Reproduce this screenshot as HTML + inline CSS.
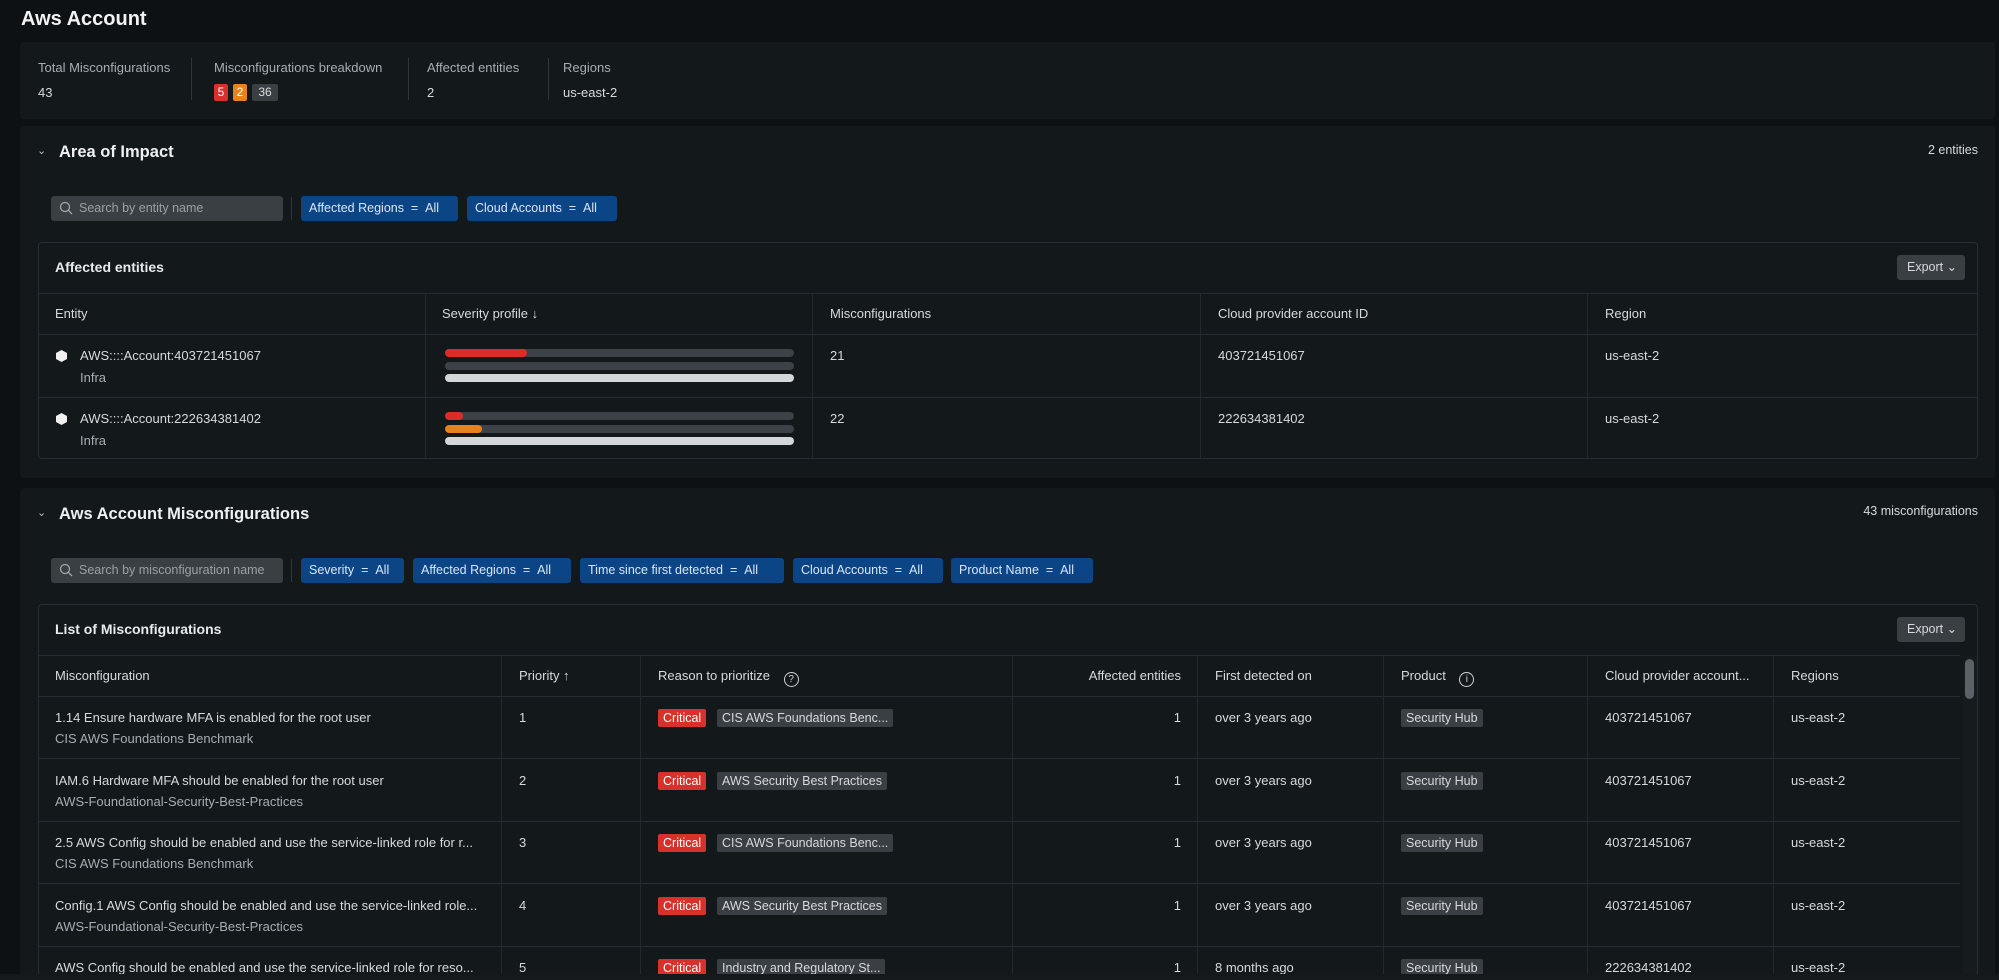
<!DOCTYPE html>
<html style="overflow:hidden;width:1999px;height:980px"><head><meta charset="utf-8"><style>
*{box-sizing:border-box;margin:0;padding:0}
body{width:1999px;height:980px;overflow:hidden;background:#0e1113;font-family:"Liberation Sans",sans-serif;color:#d6dadd;font-size:13px;position:relative}
.a{position:absolute;white-space:nowrap}
.panel{position:absolute;background:#13181b;border-radius:4px}
.card{position:absolute;border:1px solid #282e33;border-radius:4px;background:#13181b}
.muted{color:#a7adb2}
.chip{position:absolute;height:25px;background:#0c4586;border-radius:3px;color:#d9e6f7;font-size:12.5px;line-height:25px;padding:0 8px;white-space:nowrap}
.search{position:absolute;height:25px;background:#3a3f44;border-radius:3px;color:#9aa0a5;font-size:12.5px;line-height:25px;padding-left:28px;white-space:nowrap;overflow:hidden}
.search svg{position:absolute;left:8px;top:5px}
.vsep{position:absolute;width:1px;background:#30363b}
.hl{position:absolute;height:1px;background:#262c31}
.vl{position:absolute;width:1px;background:#232a2e}
.btn{position:absolute;background:#3a3f44;border-radius:3px;color:#d6dadd;font-size:12.5px;line-height:25px;height:25px;padding-left:10px}
.bar{position:absolute;height:8px;border-radius:4px;background:#3c4247;overflow:hidden}
.bar i{display:block;height:100%;border-radius:4px}
.crit{position:absolute;background:#d8302b;color:#fff;border-radius:2px;font-size:12.5px;line-height:18px;padding:0 5px}
.tag{position:absolute;background:#3a3f44;color:#d6dadd;border-radius:2px;font-size:12.5px;line-height:18px;padding:0 5px;white-space:nowrap}
h2{position:absolute;font-size:16.5px;font-weight:bold;color:#eef0f2;white-space:nowrap}
</style></head><body>
<div class="a" style="left:21px;top:8px;font-size:20px;font-weight:bold;color:#f0f2f4">Aws Account</div>

<div class="panel" style="left:20px;top:42px;width:1975px;height:77px"></div>
<div class="a muted" style="left:38px;top:60px">Total Misconfigurations</div>
<div class="a" style="left:38px;top:85px">43</div>
<div class="vsep" style="left:191px;top:58px;height:42px"></div>
<div class="a muted" style="left:214px;top:60px">Misconfigurations breakdown</div>
<div class="a" style="left:214px;top:84px;height:17px;width:14px;background:#d8302b;border-radius:2px;text-align:center;line-height:17px;color:#fff;font-size:12px">5</div>
<div class="a" style="left:233px;top:84px;height:17px;width:14px;background:#e9821a;border-radius:2px;text-align:center;line-height:17px;color:#fff;font-size:12px">2</div>
<div class="a" style="left:252px;top:84px;height:17px;width:26px;background:#3a3f44;border-radius:2px;text-align:center;line-height:17px;color:#ddd;font-size:12px">36</div>
<div class="vsep" style="left:408px;top:58px;height:42px"></div>
<div class="a muted" style="left:427px;top:60px">Affected entities</div>
<div class="a" style="left:427px;top:85px">2</div>
<div class="vsep" style="left:548px;top:58px;height:42px"></div>
<div class="a muted" style="left:563px;top:60px">Regions</div>
<div class="a" style="left:563px;top:85px">us-east-2</div>

<!-- Area of impact -->
<div class="panel" style="left:20px;top:126px;width:1975px;height:352px"></div>
<div class="a" style="left:37px;top:144px;font-size:11px;color:#bbb">&#8964;</div>
<h2 style="left:59px;top:143px">Area of Impact</h2>
<div class="a" style="right:21px;top:143px;font-size:12.5px">2 entities</div>
<div class="search" style="left:51px;top:196px;width:232px"><svg width="14" height="14" viewBox="0 0 14 14"><circle cx="6" cy="6" r="4.5" fill="none" stroke="#a0a6ab" stroke-width="1.3"/><path d="M9.3 9.3 13 13" stroke="#a0a6ab" stroke-width="1.3"/></svg>Search by entity name</div>
<div class="vsep" style="left:291px;top:197px;height:23px"></div>
<div class="chip" style="left:301px;top:196px;width:157px">Affected Regions &nbsp;= &nbsp;All</div>
<div class="chip" style="left:467px;top:196px;width:150px">Cloud Accounts &nbsp;= &nbsp;All</div>

<div class="card" style="left:38px;top:242px;width:1940px;height:217px"></div>
<div class="a" style="left:55px;top:259px;font-size:14px;font-weight:bold;color:#e8eaec">Affected entities</div>
<div class="btn" style="left:1897px;top:255px;width:68px">Export &#8964;</div>
<div class="hl" style="left:39px;top:293px;width:1938px"></div>
<div class="hl" style="left:39px;top:334px;width:1938px"></div>
<div class="hl" style="left:39px;top:397px;width:1938px"></div>
<div class="vl" style="left:425px;top:294px;height:164px"></div>
<div class="vl" style="left:812px;top:294px;height:164px"></div>
<div class="vl" style="left:1200px;top:294px;height:164px"></div>
<div class="vl" style="left:1587px;top:294px;height:164px"></div>
<div class="a" style="left:55px;top:306px">Entity</div>
<div class="a" style="left:442px;top:306px">Severity profile &#8595;</div>
<div class="a" style="left:830px;top:306px">Misconfigurations</div>
<div class="a" style="left:1218px;top:306px">Cloud provider account ID</div>
<div class="a" style="left:1605px;top:306px">Region</div>

<div class="a" style="left:56px;top:350px;width:11px;height:12px;background:#f0f0f0;clip-path:polygon(50% 0,100% 25%,100% 75%,50% 100%,0 75%,0 25%)"></div>
<div class="a" style="left:80px;top:348px">AWS::::Account:403721451067</div>
<div class="a muted" style="left:80px;top:370px">Infra</div>
<div class="bar" style="left:445px;top:349px;width:349px"><i style="width:82px;background:#dd2c28"></i></div>
<div class="bar" style="left:445px;top:362px;width:349px"></div>
<div class="bar" style="left:445px;top:374px;width:349px;background:#d3d7da"></div>
<div class="a" style="left:830px;top:348px">21</div>
<div class="a" style="left:1218px;top:348px">403721451067</div>
<div class="a" style="left:1605px;top:348px">us-east-2</div>

<div class="a" style="left:56px;top:413px;width:11px;height:12px;background:#f0f0f0;clip-path:polygon(50% 0,100% 25%,100% 75%,50% 100%,0 75%,0 25%)"></div>
<div class="a" style="left:80px;top:411px">AWS::::Account:222634381402</div>
<div class="a muted" style="left:80px;top:433px">Infra</div>
<div class="bar" style="left:445px;top:412px;width:349px"><i style="width:18px;background:#dd2c28"></i></div>
<div class="bar" style="left:445px;top:425px;width:349px"><i style="width:37px;background:#e8821a"></i></div>
<div class="bar" style="left:445px;top:437px;width:349px;background:#d3d7da"></div>
<div class="a" style="left:830px;top:411px">22</div>
<div class="a" style="left:1218px;top:411px">222634381402</div>
<div class="a" style="left:1605px;top:411px">us-east-2</div>

<!-- Misconfigurations -->
<div class="panel" style="left:20px;top:488px;width:1975px;height:492px"></div>
<div class="a" style="left:37px;top:506px;font-size:11px;color:#bbb">&#8964;</div>
<h2 style="left:59px;top:505px">Aws Account Misconfigurations</h2>
<div class="a" style="right:21px;top:504px;font-size:12.5px">43 misconfigurations</div>
<div class="search" style="left:51px;top:558px;width:232px"><svg width="14" height="14" viewBox="0 0 14 14"><circle cx="6" cy="6" r="4.5" fill="none" stroke="#a0a6ab" stroke-width="1.3"/><path d="M9.3 9.3 13 13" stroke="#a0a6ab" stroke-width="1.3"/></svg>Search by misconfiguration name</div>
<div class="vsep" style="left:291px;top:559px;height:23px"></div>
<div class="chip" style="left:301px;top:558px;width:103px">Severity &nbsp;= &nbsp;All</div>
<div class="chip" style="left:413px;top:558px;width:158px">Affected Regions &nbsp;= &nbsp;All</div>
<div class="chip" style="left:580px;top:558px;width:204px">Time since first detected &nbsp;= &nbsp;All</div>
<div class="chip" style="left:793px;top:558px;width:150px">Cloud Accounts &nbsp;= &nbsp;All</div>
<div class="chip" style="left:951px;top:558px;width:142px">Product Name &nbsp;= &nbsp;All</div>

<div class="card" style="left:38px;top:604px;width:1940px;height:376px"></div>
<div class="a" style="left:55px;top:621px;font-size:14px;font-weight:bold;color:#e8eaec">List of Misconfigurations</div>
<div class="btn" style="left:1897px;top:617px;width:68px">Export &#8964;</div>
<div class="hl" style="left:39px;top:655px;width:1921px"></div>
<div class="hl" style="left:39px;top:696px;width:1921px"></div>
<div class="hl" style="left:39px;top:758px;width:1921px"></div>
<div class="hl" style="left:39px;top:821px;width:1921px"></div>
<div class="hl" style="left:39px;top:883px;width:1921px"></div>
<div class="hl" style="left:39px;top:946px;width:1921px"></div>
<div class="vl" style="left:501px;top:656px;height:324px"></div>
<div class="vl" style="left:640px;top:656px;height:324px"></div>
<div class="vl" style="left:1012px;top:656px;height:324px"></div>
<div class="vl" style="left:1197px;top:656px;height:324px"></div>
<div class="vl" style="left:1383px;top:656px;height:324px"></div>
<div class="vl" style="left:1587px;top:656px;height:324px"></div>
<div class="vl" style="left:1773px;top:656px;height:324px"></div>
<div class="a" style="left:1963px;top:656px;width:14px;height:324px;background:#161b1e"></div>
<div class="a" style="left:1965px;top:659px;width:9px;height:40px;background:#5b6166;border-radius:5px"></div>

<div class="a" style="left:55px;top:668px">Misconfiguration</div>
<div class="a" style="left:519px;top:668px">Priority &#8593;</div>
<div class="a" style="left:658px;top:668px">Reason to prioritize <span style="display:inline-block;width:15px;height:15px;border:1.3px solid #cfd3d6;border-radius:50%;font-size:10px;line-height:13px;text-align:center;margin-left:10px;vertical-align:-2px">?</span></div>
<div class="a" style="left:1000px;width:181px;text-align:right;top:668px">Affected entities</div>
<div class="a" style="left:1215px;top:668px">First detected on</div>
<div class="a" style="left:1401px;top:668px">Product <span style="display:inline-block;width:15px;height:15px;border:1.3px solid #cfd3d6;border-radius:50%;font-size:10px;line-height:13px;text-align:center;margin-left:10px;vertical-align:-2px">i</span></div>
<div class="a" style="left:1605px;top:668px">Cloud provider account...</div>
<div class="a" style="left:1791px;top:668px">Regions</div>

<div class="a" style="left:55px;top:710px">1.14 Ensure hardware MFA is enabled for the root user</div>
<div class="a muted" style="left:55px;top:731px">CIS AWS Foundations Benchmark</div>
<div class="a" style="left:519px;top:710px">1</div>
<div class="crit" style="left:658px;top:709px">Critical</div><div class="tag" style="left:717px;top:709px">CIS AWS Foundations Benc...</div>
<div class="a" style="left:1000px;width:181px;text-align:right;top:710px">1</div>
<div class="a" style="left:1215px;top:710px">over 3 years ago</div>
<div class="tag" style="left:1401px;top:709px">Security Hub</div>
<div class="a" style="left:1605px;top:710px">403721451067</div>
<div class="a" style="left:1791px;top:710px">us-east-2</div>

<div class="a" style="left:55px;top:773px">IAM.6 Hardware MFA should be enabled for the root user</div>
<div class="a muted" style="left:55px;top:794px">AWS-Foundational-Security-Best-Practices</div>
<div class="a" style="left:519px;top:773px">2</div>
<div class="crit" style="left:658px;top:772px">Critical</div><div class="tag" style="left:717px;top:772px">AWS Security Best Practices</div>
<div class="a" style="left:1000px;width:181px;text-align:right;top:773px">1</div>
<div class="a" style="left:1215px;top:773px">over 3 years ago</div>
<div class="tag" style="left:1401px;top:772px">Security Hub</div>
<div class="a" style="left:1605px;top:773px">403721451067</div>
<div class="a" style="left:1791px;top:773px">us-east-2</div>

<div class="a" style="left:55px;top:835px">2.5 AWS Config should be enabled and use the service-linked role for r...</div>
<div class="a muted" style="left:55px;top:856px">CIS AWS Foundations Benchmark</div>
<div class="a" style="left:519px;top:835px">3</div>
<div class="crit" style="left:658px;top:834px">Critical</div><div class="tag" style="left:717px;top:834px">CIS AWS Foundations Benc...</div>
<div class="a" style="left:1000px;width:181px;text-align:right;top:835px">1</div>
<div class="a" style="left:1215px;top:835px">over 3 years ago</div>
<div class="tag" style="left:1401px;top:834px">Security Hub</div>
<div class="a" style="left:1605px;top:835px">403721451067</div>
<div class="a" style="left:1791px;top:835px">us-east-2</div>

<div class="a" style="left:55px;top:898px">Config.1 AWS Config should be enabled and use the service-linked role...</div>
<div class="a muted" style="left:55px;top:919px">AWS-Foundational-Security-Best-Practices</div>
<div class="a" style="left:519px;top:898px">4</div>
<div class="crit" style="left:658px;top:897px">Critical</div><div class="tag" style="left:717px;top:897px">AWS Security Best Practices</div>
<div class="a" style="left:1000px;width:181px;text-align:right;top:898px">1</div>
<div class="a" style="left:1215px;top:898px">over 3 years ago</div>
<div class="tag" style="left:1401px;top:897px">Security Hub</div>
<div class="a" style="left:1605px;top:898px">403721451067</div>
<div class="a" style="left:1791px;top:898px">us-east-2</div>

<div class="a" style="left:55px;top:960px">AWS Config should be enabled and use the service-linked role for reso...</div>
<div class="a" style="left:519px;top:960px">5</div>
<div class="crit" style="left:658px;top:959px">Critical</div><div class="tag" style="left:717px;top:959px">Industry and Regulatory St...</div>
<div class="a" style="left:1000px;width:181px;text-align:right;top:960px">1</div>
<div class="a" style="left:1215px;top:960px">8 months ago</div>
<div class="tag" style="left:1401px;top:959px">Security Hub</div>
<div class="a" style="left:1605px;top:960px">222634381402</div>
<div class="a" style="left:1791px;top:960px">us-east-2</div>

<div class="a" style="left:0;top:974px;width:1999px;height:6px;background:#15191c"></div>
</body></html>
